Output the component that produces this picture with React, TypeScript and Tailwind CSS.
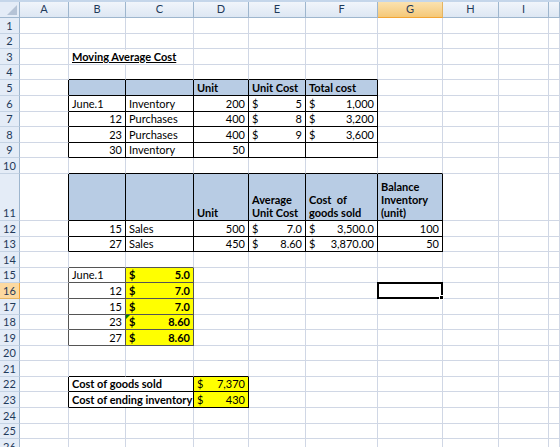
import React from "react";

type Money = [string, string];
type Cell = {
  t?: React.ReactNode;
  align?: "l" | "r";
  bold?: boolean;
  bg?: "blue" | "yellow";
  money?: Money;
  span?: number;
  spill?: boolean;
};

const COLS = ["", "A", "B", "C", "D", "E", "F", "G", "H", "I", ""];
const ROWS = Array.from({ length: 26 }, (_, i) => i + 1);

// spreadsheet content, keyed by cell name
const CELLS: Record<string, Cell> = {
  B3: { t: <span className="underline">Moving Average Cost</span>, bold: true, spill: true },

  B5: { bg: "blue" },
  C5: { bg: "blue" },
  D5: { t: "Unit", bold: true, bg: "blue" },
  E5: { t: "Unit Cost", bold: true, bg: "blue" },
  F5: { t: "Total cost", bold: true, bg: "blue" },
  B6: { t: "June.1" },
  C6: { t: "Inventory" },
  D6: { t: "200", align: "r" },
  E6: { money: ["$", "5"] },
  F6: { money: ["$", "1,000"] },
  B7: { t: "12", align: "r" },
  C7: { t: "Purchases" },
  D7: { t: "400", align: "r" },
  E7: { money: ["$", "8"] },
  F7: { money: ["$", "3,200"] },
  B8: { t: "23", align: "r" },
  C8: { t: "Purchases" },
  D8: { t: "400", align: "r" },
  E8: { money: ["$", "9"] },
  F8: { money: ["$", "3,600"] },
  B9: { t: "30", align: "r" },
  C9: { t: "Inventory" },
  D9: { t: "50", align: "r" },

  B11: { bg: "blue" },
  C11: { bg: "blue" },
  D11: { t: "Unit", bold: true, bg: "blue" },
  E11: { t: <>Average<br />Unit Cost</>, bold: true, bg: "blue" },
  F11: { t: <>Cost&nbsp; of<br />goods sold</>, bold: true, bg: "blue" },
  G11: { t: <>Balance<br />Inventory<br />(unit)</>, bold: true, bg: "blue" },
  B12: { t: "15", align: "r" },
  C12: { t: "Sales" },
  D12: { t: "500", align: "r" },
  E12: { money: ["$", "7.0"] },
  F12: { money: ["$", "3,500.0"] },
  G12: { t: "100", align: "r" },
  B13: { t: "27", align: "r" },
  C13: { t: "Sales" },
  D13: { t: "450", align: "r" },
  E13: { money: ["$", "8.60"] },
  F13: { money: ["$", "3,870.00"] },
  G13: { t: "50", align: "r" },

  B15: { t: "June.1" },
  C15: { money: ["$", "5.0"], bold: true, bg: "yellow" },
  B16: { t: "12", align: "r" },
  C16: { money: ["$", "7.0"], bold: true, bg: "yellow" },
  B17: { t: "15", align: "r" },
  C17: { money: ["$", "7.0"], bold: true, bg: "yellow" },
  B18: { t: "23", align: "r" },
  C18: { money: ["$", "8.60"], bold: true, bg: "yellow" },
  B19: { t: "27", align: "r" },
  C19: { money: ["$", "8.60"], bold: true, bg: "yellow" },

  B22: { t: "Cost of goods sold", bold: true, span: 2 },
  D22: { money: ["$", "7,370"], bg: "yellow" },
  B23: { t: "Cost of ending inventory", bold: true, span: 2 },
  D23: { money: ["$", "430"], bg: "yellow" },
};

type Line = "grid" | "black" | "gray";

// boxed ranges: [firstCol, lastCol, firstRow, lastRow, colour]
const BOXES: [number, number, number, number, Line][] = [
  [2, 6, 5, 9, "black"],
  [2, 7, 11, 13, "black"],
  [2, 3, 15, 19, "gray"],
  [2, 4, 22, 23, "black"],
];

const RIGHT: Record<Line, string> = {
  grid: "border-r-[#d0d7e5]",
  black: "border-r-black",
  gray: "border-r-[#555555]",
};
const BOTTOM: Record<Line, string> = {
  grid: "border-b-[#d0d7e5]",
  black: "border-b-black",
  gray: "border-b-[#555555]",
};

function lines(col: number, row: number): [Line, Line] {
  let r: Line = "grid";
  let b: Line = "grid";
  for (const [c1, c2, r1, r2, k] of BOXES) {
    if (row >= r1 && row <= r2 && col >= c1 - 1 && col <= c2) r = k;
    if (col >= c1 && col <= c2 && row >= r1 - 1 && row <= r2) b = k;
  }
  return [r, b];
}

function CellBox({ col, row }: { col: number; row: number }) {
  const name = COLS[col] + row;
  const cell = CELLS[name] ?? {};
  const span = cell.span ?? 1;
  const [r, b] = lines(col + span - 1, row);
  const bg =
    cell.bg === "blue" ? "bg-[#b8cce4]" : cell.bg === "yellow" ? "bg-[#ffff00]" : "";
  const selected = name === "G16";

  return (
    <div
      className={`relative flex items-end whitespace-nowrap border-r border-b px-[3px] pb-[1px] leading-[13px] ${RIGHT[r]} ${BOTTOM[b]} ${bg} ${
        cell.bold ? "font-bold" : ""
      } ${cell.align === "r" ? "justify-end" : "justify-start"} ${span === 2 ? "col-span-2" : ""} ${
        cell.spill ? "z-[2] overflow-visible" : ""
      }`}
    >
      {cell.money ? (
        <div className="flex w-full justify-between">
          <span>{cell.money[0]}</span>
          <span>{cell.money[1]}</span>
        </div>
      ) : (
        <span className={cell.spill ? "relative -mb-[1px] bg-white pb-[1px] pr-[2px]" : ""}>{cell.t}</span>
      )}
      {name === "C18" && (
        <div className="absolute left-0 top-0 h-0 w-0 border-r-[4px] border-t-[4px] border-r-transparent border-t-[#008000]" />
      )}
      {selected && (
        <div className="pointer-events-none absolute -left-[1px] -top-[1px] -right-[1px] -bottom-[1px] z-10 border-2 border-black">
          <div className="absolute -bottom-[3px] -right-[3px] h-[5px] w-[5px] border border-white bg-black" />
        </div>
      )}
    </div>
  );
}

export default function App() {
  return (
    <div
      className="h-[447px] w-[560px] overflow-hidden bg-white text-[11px] text-black"
      style={{ fontFamily: "Lato, 'Open Sans', sans-serif" }}
    >
      <div className="h-[2px] bg-[#c5d6ea]" />
      <div className="grid grid-cols-[20px_49px_57px_68px_55px_57px_72px_65px_56px_50px_1fr] grid-rows-[16px_repeat(10,15.6px)_47px_repeat(15,15.6px)]">
        {/* column headings */}
        {COLS.map((c, i) =>
          i === 0 ? (
            <div key="corner" className="relative border-r border-b border-[#9eb6ce] bg-[#e4ecf7]">
              <svg className="absolute bottom-[2px] right-[2px]" width="10" height="10" viewBox="0 0 10 10">
                <polygon points="10,0 10,10 0,10" fill="#b5c3d6" />
              </svg>
            </div>
          ) : c === "G" ? (
            <div
              key={c}
              className="flex items-center justify-center border-r border-b border-r-[#e5b562] border-b-[#f2a535] bg-linear-to-b from-[#fbe2b0] to-[#f5c877] text-[#1f3a5a]"
            >
              {c}
            </div>
          ) : (
            <div
              key={"h" + i}
              className="flex items-center justify-center border-r border-b border-[#9eb6ce] bg-linear-to-b from-[#f1f5fb] to-[#dde7f3] text-[#1f3a5a]"
            >
              {c}
            </div>
          )
        )}

        {ROWS.map((row) => (
          <React.Fragment key={row}>
            <div
              className={`flex items-end justify-center border-r border-b pb-[1px] leading-[13px] text-[#1f3a5a] ${
                row === 16
                  ? "border-r-[#f2a535] border-b-[#e5b562] bg-[#fcd9a0]"
                  : "border-r-[#9eb6ce] border-b-[#c5d3e4] bg-[#e4ecf7]"
              }`}
            >
              {row}
            </div>
            {COLS.slice(1).map((_, j) => {
              const col = j + 1;
              const name = COLS[col] + row;
              if (name === "C22" || name === "C23") return null;
              return <CellBox key={col} col={col} row={row} />;
            })}
          </React.Fragment>
        ))}
      </div>
    </div>
  );
}
